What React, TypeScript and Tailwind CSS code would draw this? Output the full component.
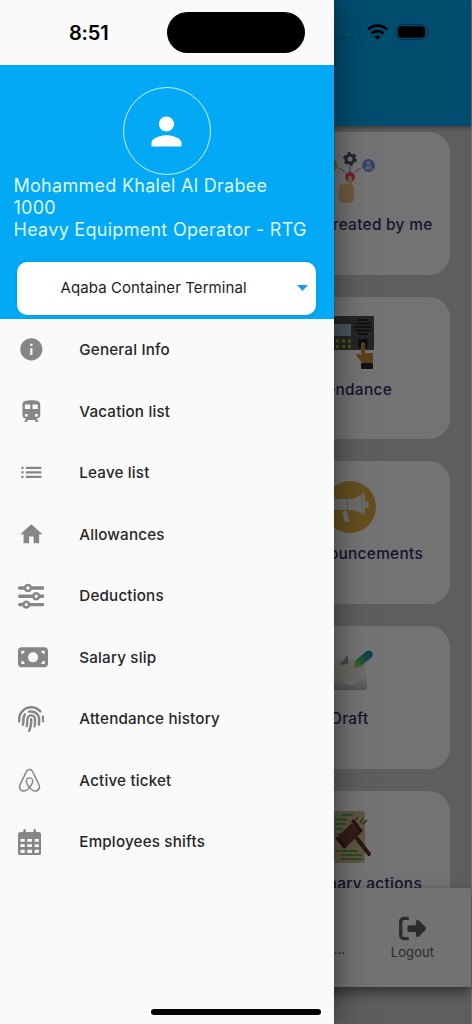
import type { ReactNode } from 'react';
import { MdHome, MdInfo, MdList, MdPerson } from 'react-icons/md';
import {
  FaAirbnb,
  FaFingerprint,
  FaMoneyBill,
  FaRightFromBracket,
  FaSliders,
} from 'react-icons/fa6';

function TrainGlyph() {
  return (
    <svg viewBox="0 0 24 24" className="size-[26.7px]" fill="currentColor" fillRule="evenodd">
      <path d="M12 2c-4.400 0-8 .5-8 4v9.800C4 17.400 5.400 18.400 7.200 18.400L5.600 21.600h2.200l1.200-1.800h6l1.200 1.800h2.200l-1.600-3.200c1.800 0 3.200-1 3.200-2.600V6c0-3.500-3.600-4-8-4zM6.200 5.900H11v4.100H6.200zM13 5.900h4.800v4.100H13zM7.500 14.100a1.400 1.400 0 1 1 0 2.800 1.400 1.400 0 0 1 0-2.800zM16.500 14.100a1.400 1.400 0 1 1 0 2.800 1.400 1.400 0 0 1 0-2.800z" />
    </svg>
  );
}

function CalendarGlyph() {
  return (
    <svg viewBox="0 0 23 26" className="h-[26.5px] w-[23.300px]" fill="currentColor" fillRule="evenodd">
      <rect x="5.300" y="0" width="2.400" height="5" rx="1.200" />
      <rect x="15.300" y="0" width="2.400" height="5" rx="1.200" />
      <path d="M3 3h17q3 0 3 3v17q0 3-3 3H3q-3 0-3-3V6q0-3 3-3zM2.400 9.800v2.700h4.200V9.800zM9.200 9.800v2.700h4.600V9.800zM16.400 9.800v2.700h4.200V9.800zM2.400 15v2.700h4.200V15zM9.200 15v2.700h4.600V15zM16.400 15v2.700h4.200V15zM2.400 20.300v2q0 1.200 1.200 1.200h3v-3.200zM9.200 20.300v3.200h4.600v-3.200zM16.400 20.300v3.200h3q1.200 0 1.200-1.200v-2z" />
    </svg>
  );
}

const menu: { label: string; icon: ReactNode }[] = [
  { label: 'General Info', icon: <MdInfo className="size-[26.7px]" /> },
  { label: 'Vacation list', icon: <TrainGlyph /> },
  { label: 'Leave list', icon: <MdList className="size-[26.7px]" /> },
  { label: 'Allowances', icon: <MdHome className="size-[26.7px]" /> },
  { label: 'Deductions', icon: <FaSliders className="size-[26.5px]" /> },
  { label: 'Salary slip', icon: <FaMoneyBill className="w-[30px] h-[26.7px]" /> },
  { label: 'Attendance history', icon: <FaFingerprint className="size-[26.5px]" /> },
  { label: 'Active ticket', icon: <FaAirbnb className="w-[23px] h-[26.5px]" /> },
  { label: 'Employees shifts', icon: <CalendarGlyph /> },
];

function TeamIcon() {
  return (
    <svg viewBox="0 0 54 54" className="size-[54px]">
      <g stroke="#7d8aa0" strokeWidth="1">
        <path d="M27 16v9M22 22l-6-4M32 22l6-4" />
      </g>
      <circle cx="8" cy="15.500" r="6.500" fill="#f5b53c" />
      <circle cx="45.500" cy="15.500" r="6.500" fill="#6f97dd" />
      <circle cx="45.500" cy="13" r="2.200" fill="#b9cdf2" />
      <path d="M41.500 19.500c0-5 8-5 8 0z" fill="#b9cdf2" />
      <circle cx="27" cy="9" r="4" fill="none" stroke="#4b5563" strokeWidth="3" />
      <circle cx="27" cy="9" r="6" fill="none" stroke="#4b5563" strokeWidth="1.800" strokeDasharray="3.140 3.140" />
      <circle cx="27" cy="27" r="5" fill="#e8506a" />
      <path
        d="M25 28c0-3 4-3 4 0v7l2 1v12q-1 5-4 5h-7q-3 0-4-4V37q1-4 4-2l1-1q2-1 4 0z"
        fill="#f2c48e"
      />
    </svg>
  );
}

function TerminalIcon() {
  return (
    <svg viewBox="0 0 54 54" className="size-[54px]">
      <rect x="1" y="1" width="50" height="34" rx="1" fill="#515154" />
      <g fill="#b02d3a">
        <circle cx="14.500" cy="5" r="1.300" />
        <circle cx="20.500" cy="5" r="1.300" />
      </g>
      <rect x="4" y="9" width="24" height="12" fill="#9dbccb" />
      <path d="M35 5h10M32.500 8.500h15M31 12h18M32.500 15.500h15M35 19h10" stroke="#1c1c1e" strokeWidth="1.500" />
      <g fill="#c4b23d">
        <rect x="7" y="24.500" width="3" height="3" />
        <rect x="13" y="24.500" width="3" height="3" />
        <rect x="19" y="24.500" width="3" height="3" />
        <rect x="25" y="24.500" width="3" height="3" />
        <rect x="7" y="30" width="3" height="3" />
        <rect x="13" y="30" width="3" height="3" />
        <rect x="19" y="30" width="3" height="3" />
        <rect x="25" y="30" width="3" height="3" />
      </g>
      <rect x="35.500" y="24" width="9" height="9" fill="#18181a" />
      <path d="M38 29q2-4 4 0v9h8v7q0 4-3 4h-7l-7-9q1-3 5 0z" fill="#c88a3c" />
      <rect x="38" y="48" width="12" height="6" rx="1" fill="#2b2b2e" />
    </svg>
  );
}

function MegaphoneIcon() {
  return (
    <svg viewBox="0 0 54 54" className="size-[54px]">
      <circle cx="27" cy="28" r="26" fill="#d9ab45" />
      <g fill="#ececec">
        <path d="M8 20h16v11H8zM25 20q9 0 14-5l1-1q2 0 2 4v14q0 4-2 4l-1-1q-5-4-14-4z" />
        <rect x="42.500" y="22" width="3" height="7" rx="1.500" />
        <path d="M20 32h4l1 6 1 1v4h-4q-1-3-2-5z" />
      </g>
      <path d="M24.500 20v11M39 15v20" stroke="#c4b48a" strokeWidth=".8" />
    </svg>
  );
}

function DraftIcon() {
  return (
    <svg viewBox="0 0 54 54" className="size-[54px]">
      <defs>
        <linearGradient id="pen" x1="0" y1="1" x2="1" y2="0">
          <stop offset="0" stopColor="#c4d640" />
          <stop offset=".45" stopColor="#3fb574" />
          <stop offset="1" stopColor="#1872c4" />
        </linearGradient>
        <linearGradient id="tray" x1="0" y1="0" x2="0" y2="1">
          <stop offset="0" stopColor="#eeeeee" />
          <stop offset="1" stopColor="#b4b4b4" />
        </linearGradient>
      </defs>
      <path d="M12 18q0-2 3-2h26l3 22H8z" fill="#e8e4dc" />
      <path d="M25 11v9l-9 1z" fill="#9c9890" />
      <path d="M8 32h9q2 8 10 8t10-8h7v11q0 3-3 3H11q-3 0-3-3z" fill="url(#tray)" />
      <path d="M30 25l3-9L43 7.500q3-1.500 5.500.5t0 5.500L38 22z" fill="url(#pen)" />
    </svg>
  );
}

function GavelIcon() {
  return (
    <svg viewBox="0 0 54 54" className="size-[54px]">
      <rect x="8" y="2" width="34" height="52" rx="3" fill="#cbb98c" />
      <path
        d="M19 6h11M12 10.500h12M12 15h10M12 20h8M12 25h6M12 42h23M18 46h21M18 50h21"
        stroke="#3f9950"
        strokeWidth="1.600"
      />
      <path d="M29 23l17 22" stroke="#5e352b" strokeWidth="4" strokeLinecap="round" />
      <path d="M14 28l15-14 9 10-15 14z" fill="#6d4034" />
      <path d="M28 12l3-2 9 12-3 2zM12 29l3-2 9 11-3 2z" fill="#542c25" />
      <path d="M35 8l-2 3M40 9l-3 5M44 11l-4 4" stroke="#6d4034" strokeWidth="1.300" />
    </svg>
  );
}

const cards: { label: string; icon: ReactNode; inset: string }[] = [
  { label: 'created by me', icon: <TeamIcon />, inset: 'pr-[17.500px]' },
  { label: 'Attendance', icon: <TerminalIcon />, inset: 'pr-[58px]' },
  { label: 'Announcements', icon: <MegaphoneIcon />, inset: 'pr-[27px]' },
  { label: 'Draft', icon: <DraftIcon />, inset: 'pr-[81.500px]' },
  { label: 'Disciplinary actions', icon: <GavelIcon />, inset: 'pr-[28px]' },
];

function HomeScreen() {
  return (
    <div className="flex h-full w-[471px] flex-col bg-[#cdcdcd]">
      <header className="h-[126px] shrink-0 bg-[#03a9f4] shadow-[0_2px_4px_rgba(0,0,0,0.35)]" />
      <main className="flex h-[762px] shrink-0 flex-col items-end gap-[22px] overflow-hidden pr-[21px] pt-[6px]">
        {cards.map((card) => (
          <div
            key={card.label}
            className="flex h-[142.700px] w-[200px] shrink-0 flex-col items-center rounded-[21px] bg-[#fafafa] pt-[18px]"
          >
            {card.icon}
            <div
              className={`mt-[10px] flex w-full justify-end whitespace-nowrap text-[15.400px] font-medium leading-[22px] tracking-[0.3px] text-[#392a6c] ${card.inset}`}
            >
              {card.label}
            </div>
          </div>
        ))}
      </main>
      <footer className="flex h-[99px] shrink-0 justify-end bg-[#f8f8f8] shadow-[0_5px_12px_rgba(0,0,0,0.5)]">
        <div className="pt-[52px] text-[13px] text-[#5a5a5a]">...</div>
        <div className="ml-[9px] flex w-[117px] flex-col items-center pt-[27px] text-[#606060]">
          <FaRightFromBracket className="size-[27px]" />
          <span className="mt-[1px] text-[13px] leading-[18px] tracking-[0.1px]">Logout</span>
        </div>
      </footer>
    </div>
  );
}

function StatusIcons() {
  return (
    <div className="absolute left-[334px] top-[22px] flex h-5 items-center">
      <div className="ml-[2px] mt-[10px] flex gap-[4px]">
        {[0, 1, 2, 3].map((i) => (
          <span key={i} className="size-[3px] rounded-full bg-[#003c57]" />
        ))}
      </div>
      <svg viewBox="0 0 21 16" className="ml-[7px] h-4 w-[21px]" fill="none" stroke="#000" strokeWidth="2.800">
        <path d="M1 5.600a13.500 13.500 0 0 1 19 0" />
        <path d="M4.600 9.600a8.400 8.400 0 0 1 11.800 0" />
        <path d="M10.500 15.800l-3-3.200q3-2.400 6 0z" fill="#000" stroke="none" />
      </svg>
      <svg viewBox="0 0 34 16" className="ml-[8px] h-4 w-[34px]">
        <rect x=".5" y=".5" width="30" height="15" rx="4.500" fill="none" stroke="#00334a" />
        <rect x="2" y="2.200" width="27" height="11.600" rx="3" fill="#000" />
        <path d="M32 5.500q2.500 2.500 0 5z" fill="#00293b" />
      </svg>
    </div>
  );
}

function Drawer() {
  return (
    <aside className="absolute inset-y-0 left-0 flex w-[333.500px] flex-col bg-[#fafafa] shadow-[0_0_30px_rgba(0,0,0,0.55)]">
      <div className="flex h-[65px] shrink-0 items-center">
        <span className="ml-[69px] w-[98px] text-[20px] font-semibold tracking-[-0.2px] text-black">8:51</span>
        <div className="h-[41px] w-[138px] rounded-full bg-black" />
      </div>
      <div className="flex h-[254px] shrink-0 flex-col bg-[#03a9f4] pt-[22px]">
        <div className="flex size-[88px] items-center justify-center self-center rounded-full border border-[#c9f1fb]">
          <MdPerson className="size-[45px] text-white" />
        </div>
        <div className="ml-[13.500px] text-[18px] leading-[22px] tracking-[0.28px] text-[#dcf8fb]">
          <p>Mohammed Khalel Al Drabee</p>
          <p>1000</p>
          <p>Heavy Equipment Operator - RTG</p>
        </div>
        <div className="ml-[17px] mt-[20.500px] flex h-[53px] w-[299px] items-center justify-between rounded-[10px] bg-white pl-[43.500px] pr-[8px] shadow-[0_0_4px_rgba(0,0,0,0.12)]">
          <span className="text-[15px] tracking-[0.09px] text-[#1c1c1c]">Aqaba Container Terminal</span>
          <svg viewBox="0 0 11 6" className="h-[6px] w-[11px] fill-[#2196f3]">
            <path d="M0 0h11L5.500 6z" />
          </svg>
        </div>
      </div>
      <nav>
        {menu.map((item) => (
          <a key={item.label} className="flex h-[61.500px] items-center pl-[17.500px] text-[#868686]">
            <div className="w-[61.800px]">{item.icon}</div>
            <span className="pt-[1.500px] text-[15.200px] font-medium tracking-[0.18px] text-[#262626]">{item.label}</span>
          </a>
        ))}
      </nav>
    </aside>
  );
}

export default function App() {
  return (
    <div className="relative h-[1024px] w-[472px] overflow-hidden bg-[#f5f5f5] font-['Inter',sans-serif]">
      <HomeScreen />
      <div className="absolute inset-0 bg-black/54" />
      <StatusIcons />
      <Drawer />
      <div className="absolute bottom-[9px] left-[151px] h-[6px] w-[170px] rounded-full bg-black" />
    </div>
  );
}
